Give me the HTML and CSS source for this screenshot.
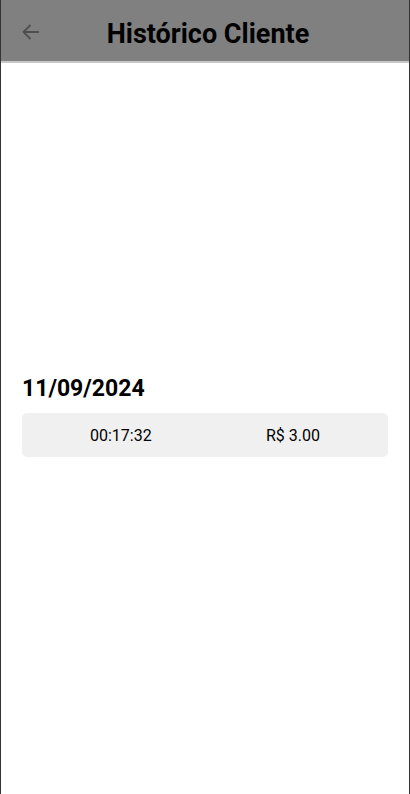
FILE: index.html
```html
<!DOCTYPE html>
<html lang="pt">
<head>
<meta charset="utf-8">
<link rel="stylesheet" href="styles.css">
</head>
<body>
<div class="screen">
  <header class="topbar">
    <button class="back" aria-label="Voltar">
      <svg width="20" height="20" viewBox="0 0 20 20"><path d="M18 10H2.5M9.5 3L2.5 10l7 7" fill="none" stroke="#4e4e4e" stroke-width="1.8"/></svg>
    </button>
    <h1 class="title">Histórico Cliente</h1>
  </header>
  <main class="content">
    <section class="day">
      <h2 class="date">11/09/2024</h2>
      <div class="entry">
        <span>00:17:32</span>
        <span>R$ 3.00</span>
      </div>
    </section>
  </main>
</div>
</body>
</html>
```
FILE: styles.css
```css
html, body { margin: 0; padding: 0; }
body { font-family: Roboto, "Noto Sans", sans-serif; background: #fff; }
.screen {
  box-sizing: border-box;
  width: 410px;
  height: 794px;
  border-left: 1px solid #333;
  border-right: 1px solid #333;
  display: flex;
  flex-direction: column;
}
.topbar {
  height: 61px;
  background: #808080;
  border-bottom: 2px solid #c8c8c8;
  display: flex;
  align-items: center;
  position: relative;
  justify-content: center;
}
.back {
  position: absolute;
  left: 20px;
  top: 22px;
  background: none;
  border: 0;
  padding: 0;
  width: 20px;
  height: 20px;
  display: flex;
}
.title {
  margin: 0;
  font-size: 27px;
  font-weight: 700;
  color: #000;
  padding-top: 6px;
  padding-left: 6px;
}
.content {
  padding: 312px 21px 0 21px;
}
.date {
  margin: 0 0 11px 0;
  font-size: 23px;
  font-weight: 700;
  color: #000;
}
.entry {
  height: 44px;
  background: #f0f0f0;
  border-radius: 5px;
  display: flex;
  align-items: center;
  justify-content: space-between;
  padding: 0 68px;
  font-size: 16px;
  font-weight: 400;
  color: #000;
}
```
